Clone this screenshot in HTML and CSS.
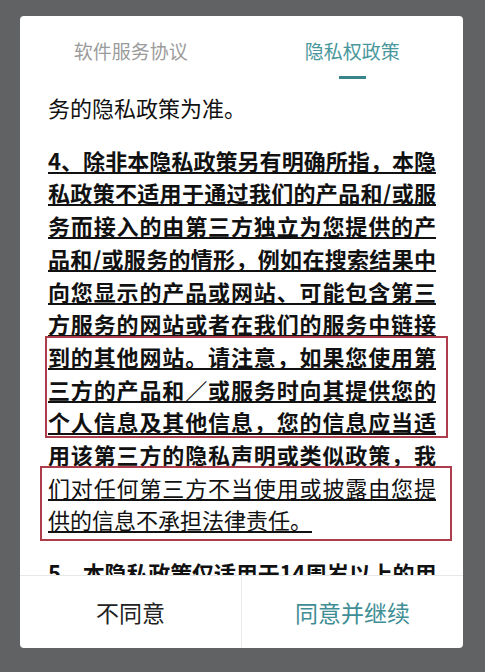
FILE: index.html
```html
<!DOCTYPE html>
<html lang="zh-CN">
<head>
  <meta charset="UTF-8">
  <title>隐私权政策</title>
  <link rel="stylesheet" href="styles.css">
</head>
<body>
<div class="dialog">
  <div class="tabs">
    <div class="tab">
      <span class="tab-label">软件服务协议</span>
      <span class="tab-bar"></span>
    </div>
    <div class="tab active">
      <span class="tab-label">隐私权政策</span>
      <span class="tab-bar"></span>
    </div>
  </div>

  <div class="content">
    <p class="para">务的隐私政策为准。</p>
    <p class="para strong">
      <span class="u">4、除非本隐私政策另有明确所指，本隐私政策不适用于通过我们的产品和/或服务而接入的由第三方独立为您提供的产品和/或服务的情形，例如在搜索结果中向您显示的产品或网站、可能包含第三方服务的网站或者在我们的服务中链接到的其他网站。请注意，如果您使用第三方的产品和／或服务时向其提供您的个人信息及其他信息，您的信息应当适用该第三方的隐私声明或类似政策，我</span><span class="u plain">们对任何第三方不当使用或披露由您提供的信息不承担法律责任。</span>
      <span class="mark mark-1"></span>
      <span class="mark mark-2"></span>
    </p>
    <p class="para strong tail">5、本隐私政策仅适用于14周岁以上的用户。</p>
  </div>

  <div class="footer">
    <div class="btn">不同意</div>
    <div class="btn primary">同意并继续</div>
  </div>
</div>
</body>
</html>
```

FILE: styles.css
```css
html, body {
    margin: 0;
    padding: 0;
    background: #616263;
    font-family: "Noto Sans CJK SC", "Noto Sans", sans-serif;
}

.dialog {
    width: 443px;
    height: 632px;
    margin: 16px 0 0 20px;
    background: #fff;
    border-radius: 4px;
    overflow: hidden;

    display: flex;
    flex-direction: column;
}

.tabs {
    height: 70px;
    flex-shrink: 0;

    display: flex;
}

.tab {
    flex: 1;
    padding-top: 23px;
    font-size: 19px;
    line-height: 24px;
    color: #9b9b9b;

    display: flex;
    flex-direction: column;
    align-items: center;
}

.tab.active {
    color: #4a979c;
}

.tab-bar {
    width: 27px;
    height: 3px;
    margin-top: 13px;
}

.tab.active .tab-bar {
    background: #3a848b;
}

.content {
    flex: 1;
    padding: 5px 27px 0 28px;
    overflow: hidden;
}

.para {
    margin: 0 0 20px;
    font-size: 22px;
    line-height: 32.7px;
    color: #111;
    text-align: justify;
}

.strong {
    position: relative;
    font-weight: bold;
}

.tail {
    letter-spacing: -0.4px;
}

.u {
    text-decoration: underline;
    text-decoration-thickness: 2px;
    text-underline-offset: 2px;
}

.u.plain {
    font-weight: normal;
    text-decoration-thickness: 1.5px;
}

.mark {
    position: absolute;
    box-sizing: border-box;
    border: 2px solid #ad3d4a;
}

.mark-1 {
    top: 192px;
    left: -3px;
    width: 403px;
    height: 102px;
}

.mark-2 {
    top: 322px;
    left: -8px;
    width: 412px;
    height: 75px;
}

.footer {
    height: 73px;
    flex-shrink: 0;
    border-top: 1px solid #e8e8e8;
    box-sizing: border-box;

    display: flex;
}

.btn {
    flex: 1;
    font-size: 23px;
    color: #222;

    display: flex;
    align-items: center;
    justify-content: center;
}

.btn.primary {
    color: #3f8e95;
    border-left: 1px solid #ebebeb;
}
```
